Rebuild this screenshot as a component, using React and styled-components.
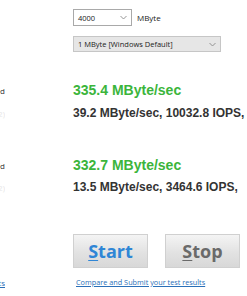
import React from "react";
import styled, { createGlobalStyle } from "styled-components";

const GlobalStyle = createGlobalStyle`
  html, body {
    margin: 0;
    padding: 0;
    background: #ffffff;
  }
  body {
    font-family: "Open Sans", "Liberation Sans", sans-serif;
    overflow: hidden;
  }
`;

const Panel = styled.div`
  width: 247px;
  height: 296px;
  padding-top: 9px;
  box-sizing: border-box;
  display: flex;
  flex-direction: column;
  overflow: hidden;
`;

const Row = styled.div`
  display: flex;
  align-items: center;
  height: ${(p) => p.$h}px;
  margin-top: ${(p) => p.$top || 0}px;
  flex-shrink: 0;
`;

const Label = styled.div`
  width: 5px;
  margin-right: 68px;
  flex-shrink: 0;
  display: flex;
  justify-content: flex-end;
  overflow: hidden;
  white-space: nowrap;
  font-size: 8px;
  color: ${(p) => (p.$link ? "#2a6fb8" : p.$faint ? "#e6e6e6" : "#333")};
  text-decoration: ${(p) => (p.$link ? "underline" : "none")};
`;

const Cell = styled.div`
  display: flex;
  align-items: center;
  gap: ${(p) => p.$gap || 0}px;
  white-space: nowrap;
`;

const Combo = styled.div`
  width: ${(p) => p.$w}px;
  height: ${(p) => p.$h}px;
  box-sizing: border-box;
  border: 1px solid ${(p) => (p.$gray ? "#c6c6c6" : "#a9a9a9")};
  background: ${(p) => (p.$gray ? "#e6e6e6" : "#ffffff")};
  display: flex;
  align-items: center;
  justify-content: space-between;
  padding: 0 4px;
  font-size: 7.5px;
  color: #222;
`;

const Chevron = () => (
  <svg width="7" height="5" viewBox="0 0 7 5">
    <path d="M0.5 1 L3.5 4 L6.5 1" fill="none" stroke="#8a8a8a" strokeWidth="0.9" />
  </svg>
);

const Unit = styled.span`
  font-size: 8px;
  color: #222;
`;

const Speed = styled.div`
  font-family: "Liberation Sans", Arial, sans-serif;
  font-weight: bold;
  font-size: 14px;
  line-height: 16px;
  color: #3bb53b;
`;

const Detail = styled.div`
  font-family: "Liberation Sans", Arial, sans-serif;
  font-weight: bold;
  font-size: 12px;
  line-height: 14px;
  color: #333333;
`;

const Button = styled.div`
  width: 75px;
  height: 34px;
  box-sizing: border-box;
  border: 1px solid #d0d0d0;
  background: linear-gradient(#f4f4f4, #e2e2e2 55%, #d8d8d8);
  display: flex;
  align-items: center;
  justify-content: center;
  font-family: "Open Sans", "Liberation Sans", sans-serif;
  font-weight: bold;
  font-size: 18px;
  color: ${(p) => p.$color};

  u {
    text-decoration-thickness: 1px;
    text-underline-offset: 2px;
  }
`;

const Link = styled.a`
  font-size: 7.3px;
  color: #2a6fb8;
  text-decoration: underline;
  margin-left: 3px;
`;

export default function App() {
  return (
    <>
      <GlobalStyle />
      <Panel>
        <Row $h={17}>
          <Label />
          <Cell $gap={5}>
            <Combo $w={59} $h={17}>
              4000
              <Chevron />
            </Combo>
            <Unit>MByte</Unit>
          </Cell>
        </Row>
        <Row $h={16} $top={10}>
          <Label />
          <Cell>
            <Combo $w={148} $h={16} $gray>
              1 MByte [Windows Default]
              <Chevron />
            </Combo>
          </Cell>
        </Row>
        <Row $h={16} $top={30}>
          <Label>Sequential Read Speed</Label>
          <Cell>
            <Speed>335.4 MByte/sec</Speed>
          </Cell>
        </Row>
        <Row $h={14} $top={8}>
          <Label $faint>4K Random Read (QD32)</Label>
          <Cell>
            <Detail>39.2 MByte/sec, 10032.8 IOPS,</Detail>
          </Cell>
        </Row>
        <Row $h={16} $top={37}>
          <Label>Sequential Write Speed</Label>
          <Cell>
            <Speed>332.7 MByte/sec</Speed>
          </Cell>
        </Row>
        <Row $h={14} $top={7}>
          <Label $faint>4K Random Write (QD32)</Label>
          <Cell>
            <Detail>13.5 MByte/sec, 3464.6 IOPS,</Detail>
          </Cell>
        </Row>
        <Row $h={34} $top={40}>
          <Label />
          <Cell $gap={17}>
            <Button $color="#2f86d6">
              <span><u>S</u>tart</span>
            </Button>
            <Button $color="#6a6a6a">
              <span><u>S</u>top</span>
            </Button>
          </Cell>
        </Row>
        <Row $h={10} $top={9}>
          <Label $link>Previous results</Label>
          <Cell>
            <Link>Compare and Submit your test results</Link>
          </Cell>
        </Row>
      </Panel>
    </>
  );
}
